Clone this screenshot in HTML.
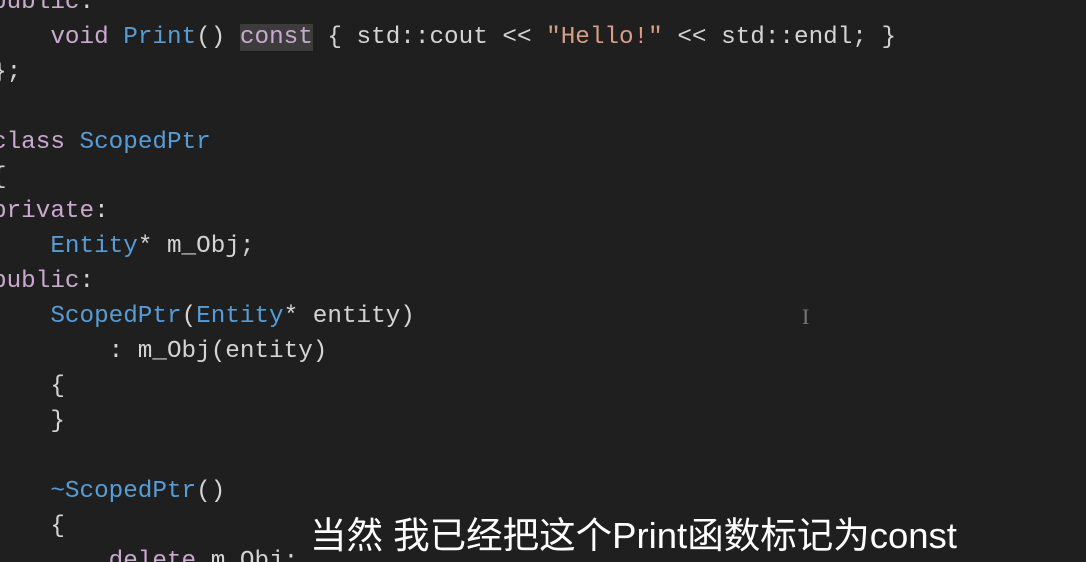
<!DOCTYPE html>
<html><head><meta charset="utf-8"><style>
html,body{margin:0;padding:0;width:1086px;height:562px;overflow:hidden;}
body{background:#1f1f1f;position:relative;}
.code{position:absolute;left:-8px;top:-14px;font-family:"Liberation Mono",monospace;font-size:24.3px;line-height:34.9px;color:#d4d4d4;white-space:pre;}
.k{color:#c9a9cf}.t{color:#569cd6}.s{color:#d69d85}
.hl{background:#3c3c3c;}
.sub{position:absolute;left:310px;top:506px;font-family:"Liberation Sans","Noto Sans CJK SC",sans-serif;font-size:36.5px;color:#fff;white-space:nowrap;}
.cur{position:absolute;left:802px;top:304px;width:8px;height:22px;color:#777;font-family:"Liberation Serif",serif;font-size:22px;}
</style></head><body>
<div class="code"><span class="k">public</span>:
    <span class="k">void</span> <span class="t">Print</span>() <span class="k hl">const</span> { std::cout &lt;&lt; <span class="s">"Hello!"</span> &lt;&lt; std::endl; }
};

<span class="k">class</span> <span class="t">ScopedPtr</span>
{
<span class="k">private</span>:
    <span class="t">Entity</span>* m_Obj;
<span class="k">public</span>:
    <span class="t">ScopedPtr</span>(<span class="t">Entity</span>* entity)
        : m_Obj(entity)
    {
    }

    <span class="t">~ScopedPtr</span>()
    {
        <span class="k">delete</span> m_Obj;</div>
<div class="cur">I</div>
<div class="sub">当然 我已经把这个Print函数标记为const</div>
</body></html>
